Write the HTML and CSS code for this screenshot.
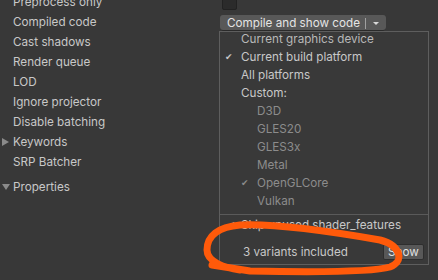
FILE: index.html
```html
<!DOCTYPE html>
<html lang="en">
<head>
  <meta charset="UTF-8">
  <meta name="viewport" content="width=device-width, initial-scale=1.0">
  <title>Shader Inspector</title>
  <link rel="stylesheet" href="styles.css">
</head>
<body>
  <div class="inspector">

    <!-- Labels -->
    <div class="labels">
      <div class="row"><span class="arrow"></span>Preprocess only</div>
      <div class="row"><span class="arrow"></span>Compiled code</div>
      <div class="row"><span class="arrow"></span>Cast shadows</div>
      <div class="row"><span class="arrow"></span>Render queue</div>
      <div class="row"><span class="arrow"></span>LOD</div>
      <div class="row"><span class="arrow"></span>Ignore projector</div>
      <div class="row"><span class="arrow"></span>Disable batching</div>
      <div class="row"><span class="arrow"><i class="tri-right"></i></span>Keywords</div>
      <div class="row"><span class="arrow"></span>SRP Batcher</div>
      <div class="row foldout"><span class="arrow"><i class="tri-down"></i></span>Properties</div>
    </div>

    <!-- Fields -->
    <div class="fields">
      <div class="checkbox"></div>
      <div class="split-button">
        <span class="label">Compile and show code</span>
        <span class="divider"></span>
        <span class="drop"><i class="tri-small"></i></span>
      </div>

      <!-- Popup menu -->
      <div class="menu">
        <div class="item dim"><span class="check"></span>Current graphics device</div>
        <div class="item"><span class="check">✔</span>Current build platform</div>
        <div class="item"><span class="check"></span>All platforms</div>
        <div class="item"><span class="check"></span>Custom:</div>
        <div class="item sub"><span class="check"></span>D3D</div>
        <div class="item sub"><span class="check"></span>GLES20</div>
        <div class="item sub"><span class="check"></span>GLES3x</div>
        <div class="item sub"><span class="check"></span>Metal</div>
        <div class="item sub"><span class="check">✔</span>OpenGLCore</div>
        <div class="item sub"><span class="check"></span>Vulkan</div>
        <div class="separator"></div>
        <div class="item skip"><span class="check">✔</span>Skip unused shader_features</div>
        <div class="variants">
          <span>3 variants included</span>
          <button class="show">Show</button>
        </div>
      </div>
    </div>
  </div>

  <!-- Hand drawn marker -->
  <svg class="scribble" width="438" height="280" viewBox="0 0 438 280">
    <path d="M 240 270 C 225 268, 207 262, 207 250 C 207 236, 218 227, 240 225 C 280 223, 340 233, 380 240 C 402 246, 404 262, 390 267 C 370 273, 300 272, 250 271 L 212 265"
          fill="none" stroke="#ff5a0a" stroke-width="7" stroke-linecap="round" stroke-linejoin="round"/>
  </svg>
</body>
</html>
```

FILE: styles.css
```css
/* Base */
body {
  margin: 0;
  background: #383838;
  font-family: 'Inter', 'Noto Sans', sans-serif;
  font-size: 11.7px;
  color: #c8c8c8;
  overflow: hidden;
}

.inspector {
  display: flex;
  height: 280px;
}

/* Labels column */
.labels {
  width: 220px;
  margin-top: -8px;
}

.labels .row {
  display: flex;
  align-items: center;
  height: 20px;
  line-height: 20px;
}

.labels .row.foldout {
  margin-top: 5px;
}

.arrow {
  width: 13px;
  display: flex;
  align-items: center;
  padding-left: 2px;
  box-sizing: border-box;
}

.tri-right {
  width: 0;
  height: 0;
  border-top: 4px solid transparent;
  border-bottom: 4px solid transparent;
  border-left: 7px solid #8a8a8a;
}

.tri-down {
  width: 0;
  height: 0;
  border-left: 4px solid transparent;
  border-right: 4px solid transparent;
  border-top: 6px solid #8a8a8a;
}

/* Fields column */
.fields {
  flex: 1;
}

.checkbox {
  width: 13px;
  height: 13px;
  margin: -5px 0 0 2px;
  background: #2b2b2b;
  border: 1px solid #222;
  border-radius: 2px;
}

.split-button {
  display: flex;
  align-items: center;
  width: 166px;
  height: 16px;
  margin-top: 5px;
  background: #585858;
  border-radius: 3px;
  box-sizing: border-box;
  box-shadow: inset 0 -1px 0 #2a2a2a;
  color: #e4e4e4;
}

.split-button .label {
  padding-left: 7px;
  flex: 1;
  line-height: 16px;
}

.split-button .divider {
  width: 1px;
  height: 11px;
  background: #a0a0a0;
}

.split-button .drop {
  width: 20px;
  display: flex;
  justify-content: center;
}

.tri-small {
  width: 0;
  height: 0;
  border-left: 3px solid transparent;
  border-right: 3px solid transparent;
  border-top: 3px solid #d8d8d8;
}

/* Popup menu */
.menu {
  width: 210px;
  height: 234px;
  margin-left: -1px;
  background: #393939;
  border: 1px solid #5e5e5e;
  box-sizing: border-box;
}

.menu .item {
  display: flex;
  height: 18px;
  line-height: 15px;
  color: #c8c8c8;
}

.menu .item.dim {
  color: #b8b8b8;
}

.menu .item.sub {
  padding-left: 16px;
  color: #8c8c8c;
}

.menu .check {
  width: 21px;
  padding-left: 5px;
  box-sizing: border-box;
  font-family: 'DejaVu Sans', sans-serif;
  font-size: 9px;
}

.menu .item.skip .check {
  padding-left: 8px;
}

.separator {
  height: 1px;
  margin: 2px 0 0;
  background: #5a5a5a;
}

.menu .item.skip {
  margin-top: 3px;
}

.variants {
  display: flex;
  align-items: center;
  justify-content: space-between;
  height: 18px;
  margin-top: 7px;
  padding: 0 4px 0 23px;
}

.show {
  width: 41px;
  height: 16px;
  padding: 0;
  background: #585858;
  border: 1px solid #2e2e2e;
  border-radius: 2px;
  color: #e0e0e0;
  font-family: 'Inter', 'Noto Sans', sans-serif;
  font-size: 11.7px;
  line-height: 14px;
}

/* Marker overlay */
.scribble {
  position: absolute;
  top: 0;
  left: 0;
  pointer-events: none;
}
```
